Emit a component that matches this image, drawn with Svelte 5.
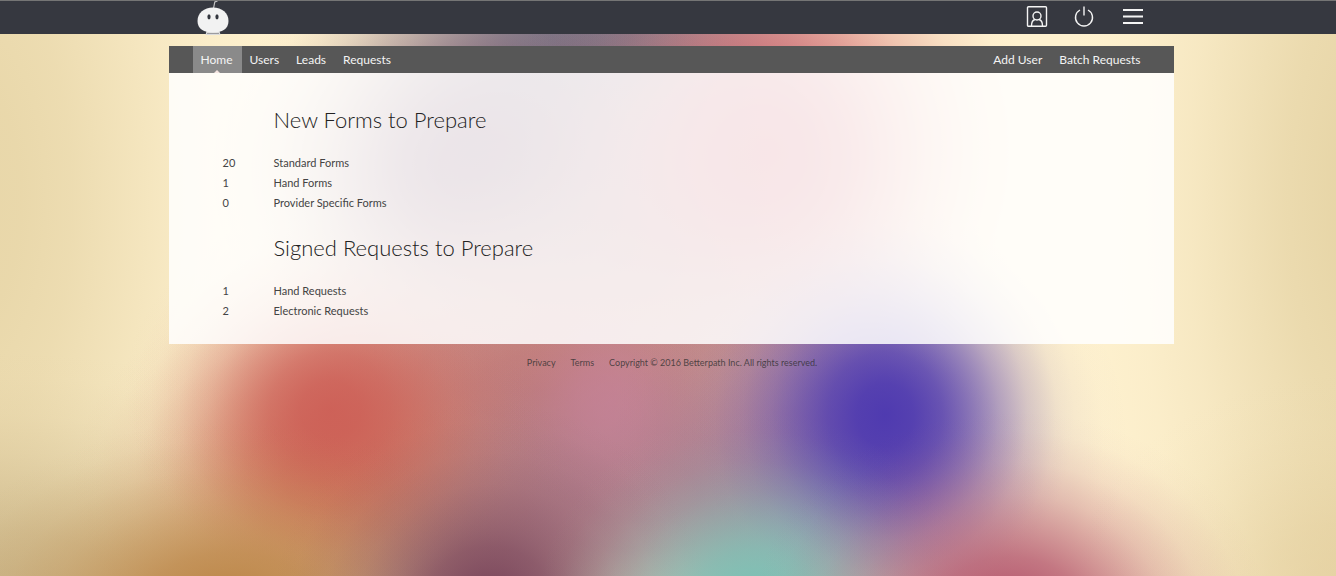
<script>
  const blobs = [
    // pale edges and corners
    { x: -30, y: 200, rx: 340, ry: 800, c: '#dcc894', o: 0.65 },
    { x: 1380, y: 200, rx: 320, ry: 800, c: '#dcc894', o: 0.7 },
    { x: 0, y: 610, rx: 460, ry: 260, c: '#bca474', o: 0.75 },
    { x: 1350, y: 590, rx: 280, ry: 220, c: '#dac28c', o: 0.5 },
    // upper field
    { x: 590, y: 20, rx: 300, ry: 240, c: '#80828e', o: 1 },
    { x: 480, y: 170, rx: 270, ry: 230, c: '#64345a', o: 0.9 },
    { x: 620, y: 260, rx: 340, ry: 240, c: '#987078', o: 0.75 },
    { x: 770, y: 150, rx: 270, ry: 280, c: '#c84458', o: 0.85 },
    // middle field
    { x: 540, y: 390, rx: 420, ry: 240, c: '#c47c78', o: 1 },
    { x: 640, y: 490, rx: 400, ry: 200, c: '#ac788a', o: 0.85 },
    { x: 320, y: 480, rx: 250, ry: 190, c: '#cc7e5c', o: 0.85 },
    { x: 330, y: 410, rx: 200, ry: 190, c: '#cc5852', o: 0.85 },
    { x: 610, y: 400, rx: 110, ry: 120, c: '#c8849e', o: 0.6 },
    { x: 870, y: 440, rx: 260, ry: 240, c: '#7c5aa0', o: 0.6 },
    { x: 885, y: 415, rx: 190, ry: 210, c: '#4a36b0', o: 0.95 },
    // lower edge
    { x: 230, y: 610, rx: 300, ry: 190, c: '#bc8648', o: 1 },
    { x: 490, y: 610, rx: 220, ry: 210, c: '#743e56', o: 0.95 },
    { x: 755, y: 610, rx: 220, ry: 200, c: '#74c0b4', o: 0.95 },
    { x: 1010, y: 620, rx: 260, ry: 210, c: '#b04e68', o: 0.95 }
  ];
  // opacity falloff of a soft blob, from its centre to its rim
  const falloff = [[0, 1], [0.15, 0.94], [0.3, 0.78], [0.45, 0.54], [0.6, 0.3], [0.75, 0.12], [0.9, 0.02], [1, 0]];

  const nav = ['Home', 'Users', 'Leads', 'Requests'];
  const actions = ['Add User', 'Batch Requests'];
  const sections = [
    { title: 'New Forms to Prepare', rows: [[20, 'Standard Forms'], [1, 'Hand Forms'], [0, 'Provider Specific Forms']] },
    { title: 'Signed Requests to Prepare', rows: [[1, 'Hand Requests'], [2, 'Electronic Requests']] }
  ];
</script>

<div class="page">
  <svg class="backdrop" viewBox="0 0 1336 576" preserveAspectRatio="none" aria-hidden="true">
    <defs>
      {#each blobs as b, i}
        <radialGradient id="blob{i}">
          {#each falloff as [at, a]}
            <stop offset={at} stop-color={b.c} stop-opacity={a * b.o} />
          {/each}
        </radialGradient>
      {/each}
    </defs>
    <rect width="1336" height="576" fill="#fef1cf" />
    {#each blobs as b, i}
      <ellipse cx={b.x} cy={b.y} rx={b.rx} ry={b.ry} fill="url(#blob{i})" />
    {/each}
  </svg>

  <header class="topbar">
    <div class="topbar-inner">
      <a class="logo" href="#home" aria-label="Betterpath">
        <svg width="34" height="34" viewBox="0 0 34 34">
          <path d="M17.500 7.500 18.800 1 21.500 0" fill="none" stroke="#c4c4c4" stroke-width="1.2" />
          <path d="M10.500 30h13l1 4h-15z" fill="#dcdcdc" />
          <path d="M17 6.500C26 6.500 32.500 12 32.500 20S26 31.500 17 31.500 1.500 28 1.500 20 8 6.500 17 6.500z" fill="#f2f2f2" />
          <path d="M11 32.500h12" stroke="#8c8c90" stroke-width=".8" />
          <ellipse cx="13" cy="15.800" rx="1.600" ry="2.600" fill="#33363e" />
          <ellipse cx="21" cy="15.800" rx="1.600" ry="2.600" fill="#33363e" />
        </svg>
      </a>
      <div class="tools">
        <button aria-label="Profile">
          <svg width="22" height="22" viewBox="0 0 22 22">
            <rect x="1.500" y=".8" width="19" height="19.400" rx="1" />
            <circle cx="11" cy="10" r="4" />
            <path d="M5.500 20c0-4 1.500-6 3.500-6.500M16.500 20c0-4-1.500-6-3.500-6.500" />
          </svg>
        </button>
        <button aria-label="Log out">
          <svg width="22" height="22" viewBox="0 0 22 22">
            <path d="M10 .5v9M6 4a8.500 8.500 0 1 0 8 0" />
          </svg>
        </button>
        <button aria-label="Menu">
          <svg width="22" height="22" viewBox="0 0 22 22">
            <path d="M1 4h20M1 10.500h20M1 17h20" stroke-width="1.800" />
          </svg>
        </button>
      </div>
    </div>
  </header>

  <main class="column">
    <nav class="menu">
      <div class="group">
        {#each nav as item, i}
          <a href="#{item.toLowerCase()}" class:active={i === 0}>{item}</a>
        {/each}
      </div>
      <div class="group">
        {#each actions as item}
          <a href="#{item.toLowerCase().replace(' ', '-')}">{item}</a>
        {/each}
      </div>
    </nav>
    <div class="panel">
      {#each sections as s}
        <section>
          <h2>{s.title}</h2>
          <table>
            <tbody>
              {#each s.rows as [count, label]}
                <tr><td class="count">{count}</td><td>{label}</td></tr>
              {/each}
            </tbody>
          </table>
        </section>
      {/each}
    </div>
  </main>

  <footer>
    <a href="#privacy">Privacy</a>
    <a href="#terms">Terms</a>
    <span>Copyright © 2016 Betterpath Inc. All rights reserved.</span>
  </footer>
</div>

<style>
  :global(body) { margin: 0; }
  .page {
    position: relative;
    isolation: isolate;
    min-height: 100vh;
    overflow: hidden;
    font-family: Lato, "Open Sans", sans-serif;
    color: #444;
  }
  .backdrop {
    position: absolute;
    inset: 0;
    z-index: -1;
    width: 100%;
    height: 100%;
  }
  a { color: inherit; text-decoration: none; }
  .topbar {
    box-sizing: border-box;
    height: 34px;
    border-top: 1px solid #757575;
    background: #363840;
  }
  .topbar-inner, .column {
    box-sizing: border-box;
    max-width: 1005px;
    margin: 0 auto;
    position: relative;
    left: 3px;
  }
  .topbar-inner {
    display: flex;
    justify-content: space-between;
    padding: 0 30px 0 24px;
  }
  .logo { display: block; margin-left: 3px; }
  .logo svg { display: block; }
  .tools { display: flex; gap: 26px; padding-top: 5px; }
  .tools button {
    display: block;
    width: 22px;
    height: 22px;
    padding: 0;
    border: 0;
    background: none;
    cursor: pointer;
  }
  .tools svg {
    display: block;
    fill: none;
    stroke: #f4f4f4;
    stroke-width: 1.4;
  }
  .column { margin-top: 12px; }
  .menu {
    display: flex;
    justify-content: space-between;
    padding: 0 24px;
    background: #575757;
    color: #f4f4f4;
    font-size: 12px;
    line-height: 27px;
  }
  .group { display: flex; }
  .menu a { position: relative; padding: 0 9px 0 8px; }
  .menu .active { background: #8a8a8a; }
  .menu .active::after {
    content: "";
    position: absolute;
    left: 50%;
    bottom: 0;
    margin-left: -3px;
    border: 3px solid transparent;
    border-top: 0;
    border-bottom-color: #f6e6e2;
  }
  .panel {
    padding: 29px 54px 23px;
    background: rgba(255, 255, 255, 0.85);
  }
  section + section { margin-top: 17px; }
  h2 {
    margin: 0 0 15px 51px;
    color: #222;
    font-size: 22px;
    font-weight: 300;
    line-height: 36px;
  }
  table { border-collapse: collapse; font-size: 11px; line-height: 20px; }
  td { padding: 0; }
  .count { width: 51px; }
  footer {
    display: flex;
    justify-content: center;
    gap: 15px;
    padding: 12px 0 24px 8px;
    color: rgba(48, 48, 48, 0.8);
    font-size: 9px;
    line-height: 14px;
  }
</style>
